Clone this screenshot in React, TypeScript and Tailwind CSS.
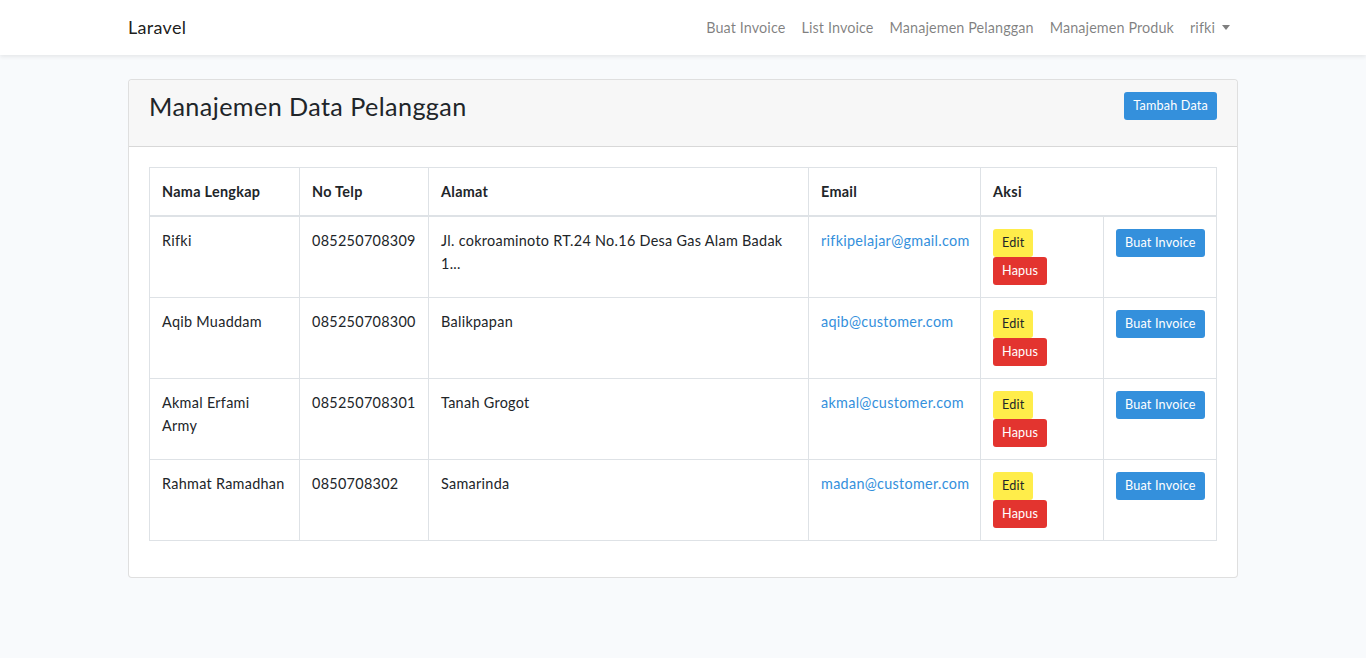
import React from "react";

const rows: { nama: React.ReactNode; key: string; telp: string; alamat: React.ReactNode; email: string }[] = [
  { key: "1", nama: "Rifki", telp: "085250708309", alamat: <>Jl. cokroaminoto RT.24 No.16 Desa Gas Alam Badak<br />1...</>, email: "rifkipelajar@gmail.com" },
  { key: "2", nama: "Aqib Muaddam", telp: "085250708300", alamat: "Balikpapan", email: "aqib@customer.com" },
  { key: "3", nama: <>Akmal Erfami<br />Army</>, telp: "085250708301", alamat: "Tanah Grogot", email: "akmal@customer.com" },
  { key: "4", nama: "Rahmat Ramadhan", telp: "0850708302", alamat: "Samarinda", email: "madan@customer.com" },
];

const btnSm = "inline-block whitespace-nowrap px-2 h-[28px] leading-[26px] text-[12.6px] tracking-[0.2px] rounded-[3px] border border-transparent align-top";

export default function App() {
  return (
    <div
      className="min-h-[658px] bg-[#f8fafc] text-[#212529] text-[14.4px] leading-[1.6] tracking-[0.3px]"
      style={{ fontFamily: "Lato, 'Noto Sans', sans-serif" }}
    >
      <nav className="bg-white h-[55px] shadow-[0_2px_4px_rgba(0,0,0,0.075)] relative">
        <div className="w-[1110px] mx-auto h-full flex items-center justify-between">
          <span className="text-[18px] text-[rgba(0,0,0,0.9)]">Laravel</span>
          <div className="flex items-center text-[rgba(0,0,0,0.5)] tracking-[0.1px]">
            <span className="px-2">Buat Invoice</span>
            <span className="px-2">List Invoice</span>
            <span className="px-2">Manajemen Pelanggan</span>
            <span className="px-2">Manajemen Produk</span>
            <span className="pl-2 pr-2 flex items-center">
              rifki
              <span className="ml-[7px] inline-block w-0 h-0 border-t-[5px] border-t-[rgba(0,0,0,0.5)] border-l-[4px] border-l-transparent border-r-[4px] border-r-transparent" />
            </span>
          </div>
        </div>
      </nav>

      <main className="pt-6">
        <div className="w-[1110px] mx-auto bg-white border border-[rgba(0,0,0,0.125)] rounded-[4px]">
          <div className="h-[67px] bg-[#f7f7f7] border-b border-[rgba(0,0,0,0.125)] rounded-t-[4px] px-5 pt-3 flex items-start justify-between">
            <h3 className="text-[25.2px] leading-[28px] font-normal tracking-[0.4px]">Manajemen Data Pelanggan</h3>
            <button className={btnSm + " bg-[#3490dc] text-white"}>Tambah Data</button>
          </div>
          <div className="p-5 pb-[20px]">
            <table className="w-[1067px] table-fixed border-collapse border border-[#dee2e6] mb-4">
              <colgroup>
                <col className="w-[150px]" />
                <col className="w-[129px]" />
                <col className="w-[380px]" />
                <col className="w-[172px]" />
                <col className="w-[123px]" />
                <col className="w-[113px]" />
              </colgroup>
              <thead>
                <tr className="text-left">
                  <th className="p-3 border border-[#dee2e6] border-b-2 font-bold">Nama Lengkap</th>
                  <th className="p-3 border border-[#dee2e6] border-b-2 font-bold">No Telp</th>
                  <th className="p-3 border border-[#dee2e6] border-b-2 font-bold">Alamat</th>
                  <th className="p-3 border border-[#dee2e6] border-b-2 font-bold">Email</th>
                  <th colSpan={2} className="p-3 border border-[#dee2e6] border-b-2 font-bold">Aksi</th>
                </tr>
              </thead>
              <tbody>
                {rows.map((r) => (
                  <tr key={r.key} className="align-top">
                    <td className="p-3 border border-[#dee2e6]">{r.nama}</td>
                    <td className="p-3 border border-[#dee2e6]">{r.telp}</td>
                    <td className="p-3 border border-[#dee2e6]">{r.alamat}</td>
                    <td className="p-3 border border-[#dee2e6] text-[#3490dc]">{r.email}</td>
                    <td className="p-3 border border-[#dee2e6]">
                      <div>
                        <button className={btnSm + " bg-[#ffed4a] text-[#212529]"}>Edit</button>
                      </div>
                      <div>
                        <button className={btnSm + " bg-[#e3342f] text-white"}>Hapus</button>
                      </div>
                    </td>
                    <td className="p-3 border border-[#dee2e6]">
                      <button className={btnSm + " bg-[#3490dc] text-white"}>Buat Invoice</button>
                    </td>
                  </tr>
                ))}
              </tbody>
            </table>
          </div>
        </div>
      </main>
    </div>
  );
}
